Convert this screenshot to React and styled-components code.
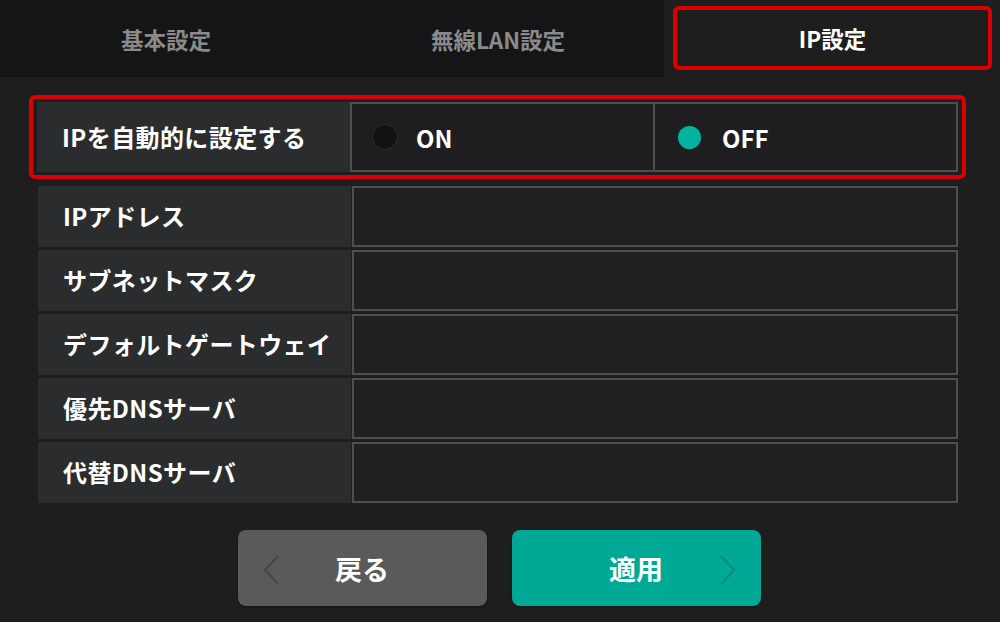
import styled, { createGlobalStyle } from "styled-components";

const GlobalStyle = createGlobalStyle`
  html, body {
    margin: 0;
    padding: 0;
    background: #1e1e1e;
  }
  body {
    font-family: "Noto Sans CJK JP", "Noto Sans", sans-serif;
    color: #fff;
  }
`;

const Page = styled.div`
  width: 1000px;
  height: 622px;
  background: #1e1e1e;
  overflow: hidden;
`;

const TabBar = styled.div`
  display: grid;
  grid-template-columns: 332px 332px 1fr;
  height: 77px;
  background: #151517;
`;

const Tab = styled.div`
  display: flex;
  align-items: center;
  justify-content: center;
  font-size: 22.5px;
  font-weight: 700;
  color: ${(p) => (p.$active ? "#ffffff" : "#8a8a8a")};
  background: ${(p) => (p.$active ? "#1e1e1e" : "transparent")};
  padding: ${(p) => (p.$active ? "6px 8px 7px 9px" : "0")};
`;

const TabInner = styled.div`
  display: flex;
  align-items: center;
  justify-content: center;
  width: 100%;
  height: 100%;
  box-sizing: border-box;
  border: ${(p) => (p.$highlight ? "4px solid #dc0000" : "none")};
  border-radius: 6px;
`;

const Content = styled.div`
  display: flex;
  flex-direction: column;
  padding-top: 18px;
`;

const Highlight = styled.div`
  margin-left: 29px;
  width: 937px;
  box-sizing: border-box;
  border: 4px solid #dc0000;
  border-radius: 6px;
  padding: 3px 4px;
`;

const Row = styled.div`
  display: grid;
  grid-template-columns: 313px 1fr;
  height: ${(p) => p.$h}px;
`;

const Label = styled.div`
  display: flex;
  align-items: center;
  padding-left: 25px;
  padding-bottom: 2px;
  background: #2b2c2e;
  font-size: 24px;
  font-weight: 700;
  color: #ffffff;
  letter-spacing: 0.4px;
`;

const Options = styled.div`
  display: grid;
  grid-template-columns: 1fr 1fr;
`;

const Option = styled.div`
  display: flex;
  align-items: center;
  gap: 18px;
  padding-left: ${(p) => (p.$first ? "20px" : "21px")};
  box-sizing: border-box;
  background: #1e1e20;
  border: 2px solid #4f4f4f;
  border-left-width: ${(p) => (p.$first ? "2px" : "1px")};
  border-right-width: ${(p) => (p.$first ? "1px" : "2px")};
  font-size: 24px;
  font-weight: 700;
  color: #fff;
`;

const Radio = styled.span`
  display: block;
  width: ${(p) => (p.$on ? "23px" : "26px")};
  height: ${(p) => (p.$on ? "23px" : "26px")};
  margin-left: ${(p) => (p.$on ? "2px" : "0")};
  margin-right: ${(p) => (p.$on ? "3px" : "0")};
  border-radius: 50%;
  box-sizing: border-box;
  background: ${(p) => (p.$on ? "#00b4a0" : "#121213")};
  border: ${(p) => (p.$on ? "none" : "1px solid #2c2c2e")};
`;

const Fields = styled.div`
  display: flex;
  flex-direction: column;
  gap: 3px;
  margin: 7px 0 0 38px;
  width: 920px;
`;

const Field = styled.div`
  background: #1f2022;
  border: 2px solid #4f4f4f;
  margin-left: 1px;
`;

const Buttons = styled.div`
  display: flex;
  justify-content: center;
  gap: 25px;
  margin-top: 27px;
  padding-right: 2px;
`;

const Button = styled.button`
  position: relative;
  width: 249px;
  height: 76px;
  border: none;
  border-radius: 8px;
  background: ${(p) => (p.$primary ? "#00a996" : "#5a5a5a")};
  color: #fff;
  font-family: "Noto Sans CJK JP", "Noto Sans", sans-serif;
  font-size: 27px;
  font-weight: 700;
  display: flex;
  align-items: center;
  justify-content: center;
  padding: 0;
  box-shadow: 0 1px 2px rgba(0, 0, 0, 0.4);
`;

const Chevron = styled.svg`
  position: absolute;
  top: 24px;
  ${(p) => (p.$side === "left" ? "left: 24px;" : "right: 24px;")}
`;

function ChevronIcon({ side, color }) {
  const d = side === "left" ? "M16 2 L3 16 L16 30" : "M3 2 L16 16 L3 30";
  return (
    <Chevron $side={side} width="19" height="32" viewBox="0 0 19 32">
      <path d={d} fill="none" stroke={color} strokeWidth="2.2" />
    </Chevron>
  );
}

const fields = [
  "IPアドレス",
  "サブネットマスク",
  "デフォルトゲートウェイ",
  "優先DNSサーバ",
  "代替DNSサーバ",
];

export default function App() {
  return (
    <Page>
      <GlobalStyle />
      <TabBar>
        <Tab>基本設定</Tab>
        <Tab>無線LAN設定</Tab>
        <Tab $active>
          <TabInner $highlight>IP設定</TabInner>
        </Tab>
      </TabBar>

      <Content>
        <Highlight>
          <Row $h={70}>
            <Label>IPを自動的に設定する</Label>
            <Options>
              <Option $first>
                <Radio />
                ON
              </Option>
              <Option>
                <Radio $on />
                OFF
              </Option>
            </Options>
          </Row>
        </Highlight>

        <Fields>
          {fields.map((name) => (
            <Row key={name} $h={61}>
              <Label>{name}</Label>
              <Field />
            </Row>
          ))}
        </Fields>

        <Buttons>
          <Button>
            <ChevronIcon side="left" color="#474747" />
            戻る
          </Button>
          <Button $primary>
            適用
            <ChevronIcon side="right" color="#0b8d7e" />
          </Button>
        </Buttons>
      </Content>
    </Page>
  );
}
